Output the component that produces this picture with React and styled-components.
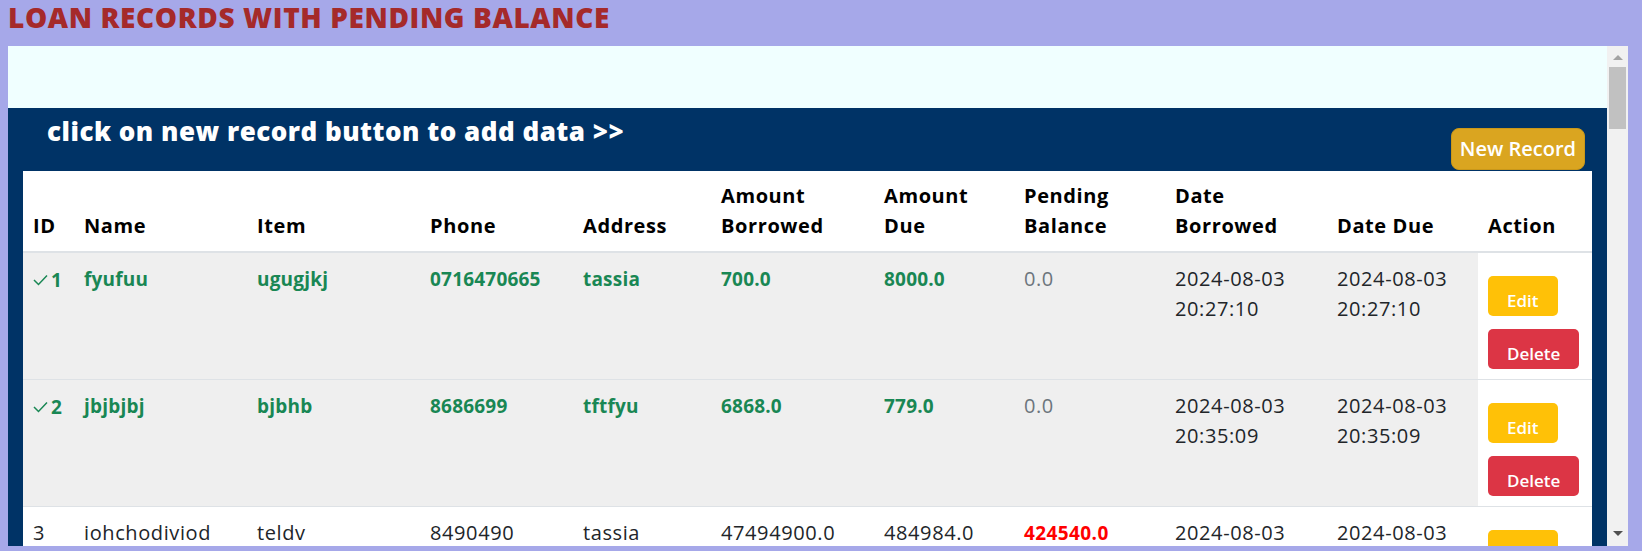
import React from 'react';
import styled, { createGlobalStyle } from 'styled-components';

const Global = createGlobalStyle`
  html, body { margin: 0; padding: 0; background: #a6a8e9; }
  body { font-family: "Open Sans", "Noto Sans", sans-serif; overflow: hidden; }
`;

const Page = styled.div`
  padding: 2px 14px 0 8px;
`;

const Title = styled.h1`
  margin: 0 0 14px;
  font-size: 28px;
  line-height: 30px;
  font-weight: 800;
  letter-spacing: 0.6px;
  color: #a52a2a;
`;

const Frame = styled.div`
  display: flex;
  width: 1620px;
  height: 500px;
  background: #f0ffff;
`;

const Viewport = styled.div`
  flex: 1;
  overflow: hidden;
`;

const Band = styled.div`
  height: 62px;
  background: #f0ffff;
`;

const Panel = styled.section`
  background: #003366;
  padding: 0 15px;
`;

const TopBar = styled.div`
  display: flex;
  justify-content: space-between;
  align-items: flex-start;
`;

const Heading = styled.h2`
  margin: 8px 0 0 24px;
  color: #fff;
  font-size: 26px;
  font-weight: 800;
  line-height: 30px;
  letter-spacing: 0.5px;
`;

const NewButton = styled.button`
  margin: 20px 7px 1px 0;
  height: 42px;
  padding: 0 8px;
  border: 1px solid #c99719;
  border-radius: 8px;
  background: #daa520;
  color: #fff;
  font-family: "Open Sans", sans-serif;
  font-size: 20px;
  font-weight: 600;
  line-height: 1;
`;

const Table = styled.table`
  width: 100%;
  table-layout: fixed;
  border-collapse: collapse;
  background: #fff;
  color: #212529;
`;

const Col = styled.col`
  width: ${p => p.$w}px;
`;

const Th = styled.th`
  text-align: left;
  vertical-align: bottom;
  padding: 10px;
  font-size: 20px;
  font-weight: 700;
  line-height: 30px;
  letter-spacing: 0.6px;
  color: #000;
  border-bottom: 2px solid #dee2e6;
`;

const Tr = styled.tr`
  background: ${p => (p.$shade ? '#efefef' : '#fff')};
  border-bottom: 1px solid #dee2e6;
`;

const toneStyles = {
  ok: 'color: #198754; font-weight: 700; font-size: 19px; letter-spacing: 0.2px;',
  muted: 'color: #6c757d; font-weight: 400; font-size: 20px; letter-spacing: 0.5px;',
  alert: 'color: #ff0000; font-weight: 700; font-size: 19px; letter-spacing: 0.4px;',
  plain: 'color: #212529; font-weight: 400; font-size: 20px; letter-spacing: 0.6px;',
};

const Td = styled.td`
  vertical-align: top;
  padding: 11px 10px 10px;
  line-height: 30px;
  white-space: nowrap;
  overflow: hidden;
  ${p => toneStyles[p.$tone || 'plain']}
`;

const ActionTd = styled.td`
  vertical-align: top;
  padding: 10px;
  background: #fff;
`;

const Actions = styled.div`
  display: flex;
  flex-direction: column;
  align-items: flex-start;
  gap: 13px;
  padding-top: 13px;
`;

const ActionButton = styled.button`
  display: flex;
  align-items: center;
  height: 40px;
  box-sizing: border-box;
  padding: 10px 19px 0;
  border: none;
  border-radius: 5px;
  background: ${p => (p.$kind === 'delete' ? '#dc3545' : '#ffc107')};
  color: #fff;
  font-family: "Open Sans", sans-serif;
  font-size: 17px;
  font-weight: 600;
  line-height: 30px;
`;

const IdWrap = styled.span`
  display: inline-flex;
  align-items: center;
  gap: 3px;
`;

const Scrollbar = styled.div`
  width: 21px;
  background: #f1f1f1;
  display: flex;
  flex-direction: column;
  align-items: center;
  padding: 9px 0 10px;
  box-sizing: border-box;
`;

const Arrow = styled.div`
  width: 0;
  height: 0;
  border-left: 5px solid transparent;
  border-right: 5px solid transparent;
  ${p => (p.$dir === 'up'
    ? 'border-bottom: 5px solid #a3a3a3;'
    : 'border-top: 5px solid #505050; margin-top: auto;')}
`;

const Thumb = styled.div`
  margin-top: 7px;
  width: 17px;
  height: 62px;
  background: #c1c1c1;
`;

const Check = () => (
  <svg width="15" height="12" viewBox="0 0 15 12" aria-hidden="true">
    <polyline points="1,6 5.5,10.5 14,1.5" fill="none" stroke="#198754" strokeWidth="1.5" />
  </svg>
);

const cols = [51, 173, 173, 153, 138, 163, 140, 151, 162, 151, 114];

const heads = [
  'ID', 'Name', 'Item', 'Phone', 'Address',
  ['Amount', 'Borrowed'], ['Amount', 'Due'], ['Pending', 'Balance'],
  ['Date', 'Borrowed'], 'Date Due', 'Action',
];

const rows = [
  {
    id: 1, paid: true, name: 'fyufuu', item: 'ugugjkj', phone: '0716470665', address: 'tassia',
    borrowed: '700.0', due: '8000.0', pending: '0.0',
    dateB: ['2024-08-03', '20:27:10'], dateD: ['2024-08-03', '20:27:10'],
  },
  {
    id: 2, paid: true, name: 'jbjbjbj', item: 'bjbhb', phone: '8686699', address: 'tftfyu',
    borrowed: '6868.0', due: '779.0', pending: '0.0',
    dateB: ['2024-08-03', '20:35:09'], dateD: ['2024-08-03', '20:35:09'],
  },
  {
    id: 3, paid: false, name: 'iohchodiviod', item: 'teldv', phone: '8490490', address: 'tassia',
    borrowed: '47494900.0', due: '484984.0', pending: '424540.0',
    dateB: ['2024-08-03', '20:41:52'], dateD: ['2024-08-03', '20:41:52'],
  },
];

function Row({ r }) {
  const tone = r.paid ? 'ok' : 'plain';
  return (
    <Tr $shade={r.paid}>
      <Td $tone={tone}>
        {r.paid ? (<IdWrap><Check />{r.id}</IdWrap>) : r.id}
      </Td>
      <Td $tone={tone}>{r.name}</Td>
      <Td $tone={tone}>{r.item}</Td>
      <Td $tone={tone}>{r.phone}</Td>
      <Td $tone={tone}>{r.address}</Td>
      <Td $tone={tone}>{r.borrowed}</Td>
      <Td $tone={tone}>{r.due}</Td>
      <Td $tone={r.paid ? 'muted' : 'alert'}>{r.pending}</Td>
      <Td>{r.dateB[0]}<br />{r.dateB[1]}</Td>
      <Td>{r.dateD[0]}<br />{r.dateD[1]}</Td>
      <ActionTd>
        <Actions>
          <ActionButton>Edit</ActionButton>
          <ActionButton $kind="delete">Delete</ActionButton>
        </Actions>
      </ActionTd>
    </Tr>
  );
}

export default function App() {
  return (
    <>
      <Global />
      <Page>
        <Title>LOAN RECORDS WITH PENDING BALANCE</Title>
        <Frame>
          <Viewport>
            <Band />
            <Panel>
              <TopBar>
                <Heading>click on new record button to add data &gt;&gt;</Heading>
                <NewButton>New Record</NewButton>
              </TopBar>
              <Table>
                <colgroup>
                  {cols.map((w, i) => <Col key={i} $w={w} />)}
                </colgroup>
                <thead>
                  <tr>
                    {heads.map((h, i) => (
                      <Th key={i}>{Array.isArray(h) ? (<>{h[0]}<br />{h[1]}</>) : h}</Th>
                    ))}
                  </tr>
                </thead>
                <tbody>
                  {rows.map(r => <Row key={r.id} r={r} />)}
                </tbody>
              </Table>
            </Panel>
          </Viewport>
          <Scrollbar>
            <Arrow $dir="up" />
            <Thumb />
            <Arrow $dir="down" />
          </Scrollbar>
        </Frame>
      </Page>
    </>
  );
}
